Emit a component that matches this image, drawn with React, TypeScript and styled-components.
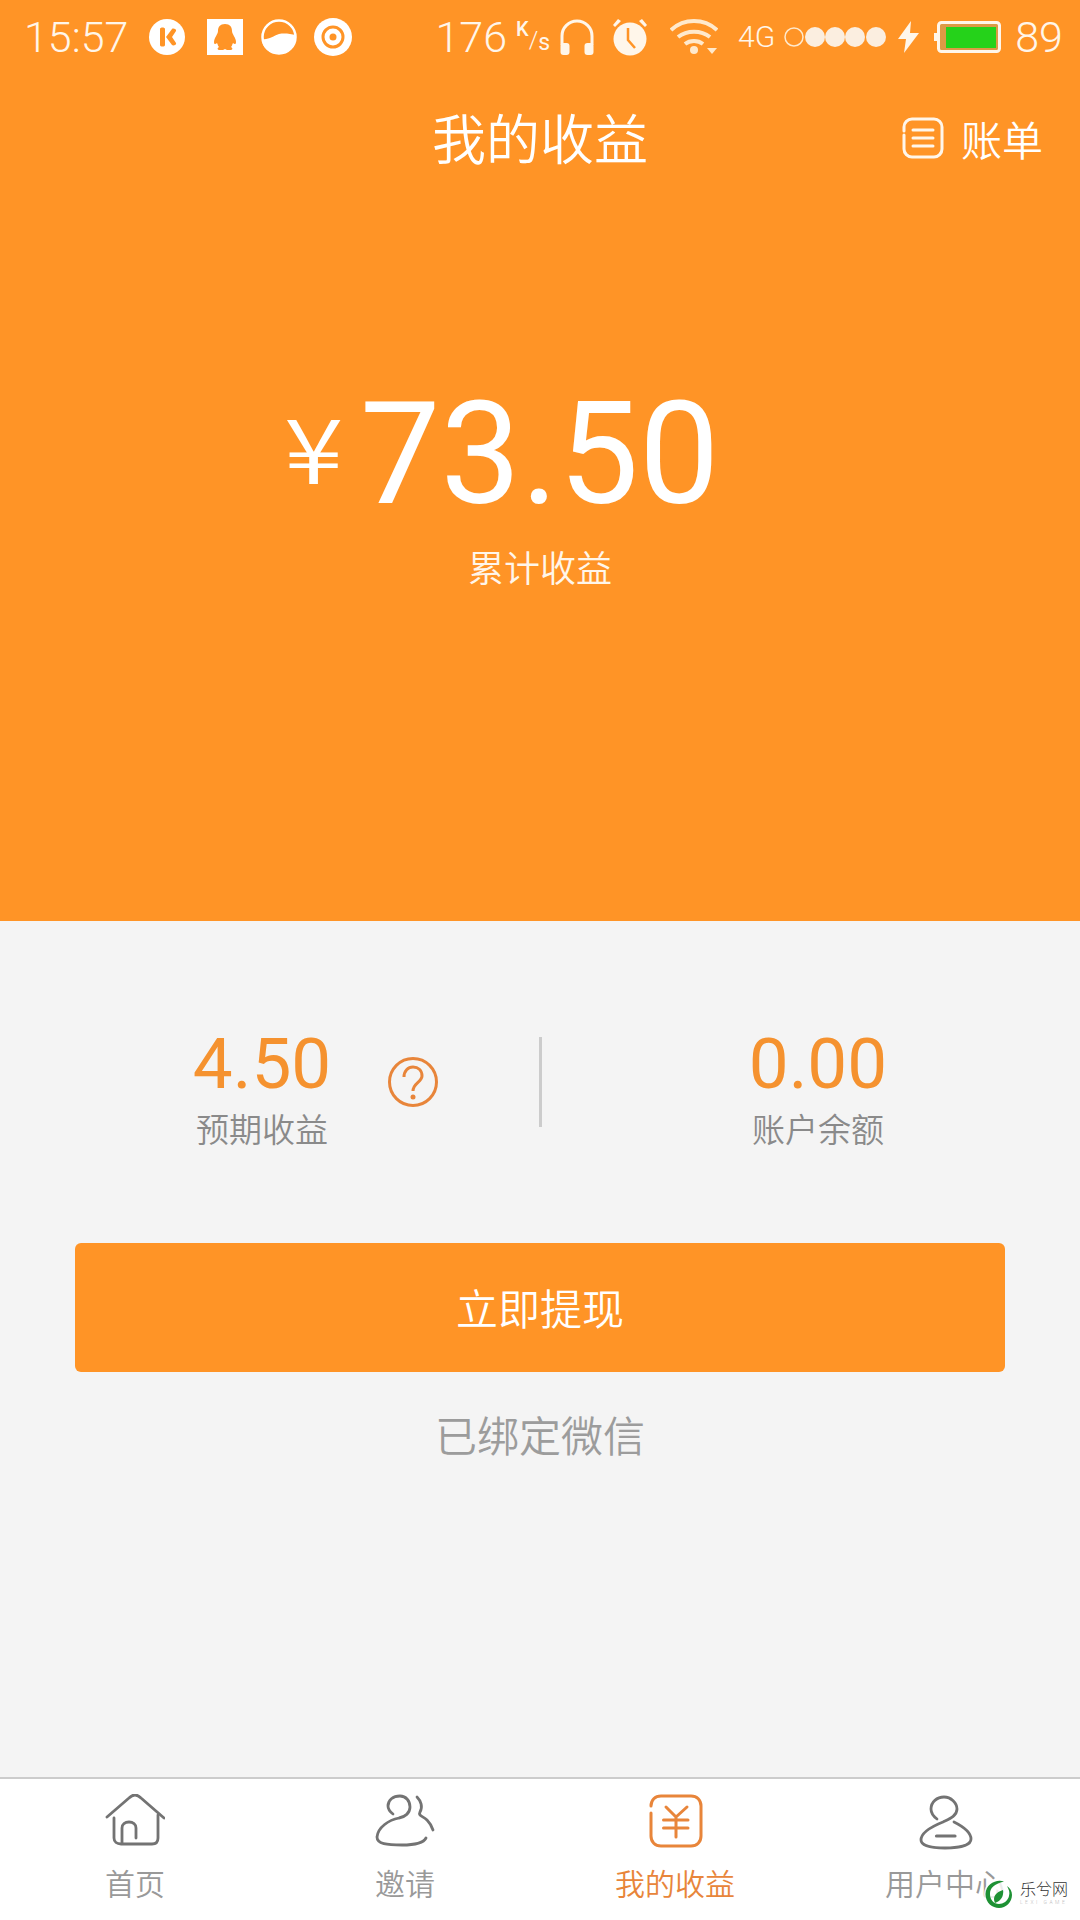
import * as React from 'react'
import styled, { createGlobalStyle } from 'styled-components'

const ORANGE = '#ff9426'
const TAB_ORANGE = '#e8853a'
const ICON_GREY = '#737373'
const CREAM = '#fff6ea'
const SANS = `Roboto, "Noto Sans CJK SC", sans-serif`

const GlobalStyle = createGlobalStyle`
  html, body {
    margin: 0;
    padding: 0;
    background: #f4f4f4;
  }
  * {
    box-sizing: border-box;
  }
`

const Page = styled.div`
  display: flex;
  flex-direction: column;
  font-family: ${SANS};
  height: 1920px;
  position: relative;
  width: 1080px;
`

const Hero = styled.section`
  background: ${ORANGE};
  color: #fff;
  display: flex;
  flex-direction: column;
  height: 921px;
`

const StatusBar = styled.div`
  align-items: center;
  display: flex;
  height: 74px;
  padding-left: 24px;
`

const StatusText = styled.span<{ $size?: number; $left?: number }>`
  color: ${CREAM};
  font-size: ${(p) => p.$size || 43}px;
  font-weight: 300;
  line-height: 1;
  margin-left: ${(p) => p.$left || 0}px;
`

const StatusIcon = styled.svg<{ $left: number }>`
  flex: none;
  margin-left: ${(p) => p.$left}px;
`

const SpeedUnit = styled.span`
  color: ${CREAM};
  display: flex;
  height: 32px;
  margin-left: 9px;
  width: 30px;
`

const SpeedKilo = styled.span`
  font-size: 20px;
  font-weight: 500;
  line-height: 16px;
`

const SpeedSlash = styled.span`
  font-size: 24px;
  font-weight: 300;
  line-height: 30px;
  margin-top: 4px;
`

const SpeedSec = styled.span`
  font-size: 23px;
  line-height: 24px;
  margin-top: 10px;
`

const NavBar = styled.header`
  align-items: center;
  display: flex;
  height: 128px;
  justify-content: center;
  position: relative;
`

const Title = styled.h1`
  font-size: 54px;
  font-weight: 350;
  margin: 0 0 4px;
`

const BillLink = styled.div`
  align-items: center;
  display: flex;
  font-size: 41px;
  font-weight: 350;
  gap: 17px;
  position: absolute;
  right: 37px;
  top: 34px;
`

const AmountBlock = styled.div`
  align-items: center;
  display: flex;
  flex-direction: column;
  padding-top: 181px;
`

const AmountRow = styled.div`
  align-items: flex-start;
  display: flex;
  line-height: 1;
  margin-right: 67px;
`

const Currency = styled.span`
  font-family: "Noto Sans CJK SC", sans-serif;
  font-size: 90px;
  font-weight: 350;
  line-height: 90px;
  margin: 17px 17px 0 0;
  transform: scaleX(1.2);
  transform-origin: right center;
`

const Amount = styled.span`
  font-size: 143px;
  font-weight: 400;
`

const AmountLabel = styled.div`
  color: ${CREAM};
  font-size: 36px;
  font-weight: 350;
  line-height: 48px;
  margin-top: 20px;
`

const Body = styled.main`
  align-items: center;
  display: flex;
  flex: 1;
  flex-direction: column;
`

const Stats = styled.div`
  align-items: center;
  display: flex;
  height: 90px;
  margin-top: 116px;
  width: 100%;
`

const StatSide = styled.div<{ $left: number }>`
  align-items: center;
  display: flex;
  gap: 58px;
  padding-left: ${(p) => p.$left}px;
  width: 539px;
`

const Divider = styled.div`
  background: #cccccc;
  height: 90px;
  margin-left: 1px;
  width: 3px;
`

const Stat = styled.div`
  align-items: center;
  display: flex;
  flex-direction: column;
  width: 136px;
`

const StatValue = styled.div`
  color: #f5922f;
  font-size: 71px;
  font-weight: 400;
  line-height: 70px;
  margin-top: 18px;
`

const StatLabel = styled.div`
  color: #8a8a8a;
  font-size: 33px;
  font-weight: 350;
  line-height: 46px;
  margin-top: 9px;
`

const WithdrawButton = styled.button`
  background: ${ORANGE};
  border: 0;
  border-radius: 6px;
  color: #fff;
  font-family: inherit;
  font-size: 42px;
  font-weight: 350;
  height: 129px;
  margin-top: 116px;
  padding: 0 0 2px;
  width: 930px;
`

const BoundNote = styled.div`
  color: #9c9c9c;
  font-size: 42px;
  font-weight: 350;
  line-height: 56px;
  margin-top: 38px;
`

const TabBar = styled.nav`
  background: #fff;
  border-top: 2px solid #cccccc;
  display: grid;
  grid-template-columns: repeat(4, 270px);
  height: 143px;
`

const Tab = styled.div<{ $active?: boolean }>`
  align-items: center;
  color: ${(p) => (p.$active ? TAB_ORANGE : '#999999')};
  display: flex;
  flex-direction: column;
  font-size: 30px;
  font-weight: 350;
  padding-top: 15px;
`

const TabIcon = styled.svg`
  display: block;
  height: 56px;
  width: 60px;
`

const TabLabel = styled.span`
  line-height: 40px;
  margin-top: 15px;
`

const Watermark = styled.div`
  align-items: center;
  bottom: 11px;
  display: flex;
  gap: 6px;
  position: absolute;
  right: 12px;
`

const WatermarkText = styled.div`
  color: #333;
  display: flex;
  flex-direction: column;
  font-size: 16px;
  font-weight: 300;
  line-height: 17px;
`

const WatermarkSub = styled.span`
  color: #bbb;
  font-size: 5px;
  letter-spacing: 2.500px;
  line-height: 9px;
  white-space: nowrap;
`

const Line = { fill: 'none', stroke: 'currentColor', strokeLinecap: 'round', strokeLinejoin: 'round' } as const

const App: React.FC = () => {
  return (
    <>
      <GlobalStyle />
      <Page>
        <Hero>
          <StatusBar>
            <StatusText>15:57</StatusText>
            {/* k */}
            <StatusIcon $left={21} width="36" height="36" viewBox="0 0 36 36">
              <circle cx="18" cy="18" r="18" fill="#fff" />
              <path d="M11 10c0-2 5-2 5 0v16c0 2-5 2-5 0zM17 18l6-8c1-1 5 0 4 2l-4 6 4 6c1 2-3 3-4 2z" fill={ORANGE} />
            </StatusIcon>
            {/* qq */}
            <StatusIcon $left={22} width="36" height="36" viewBox="0 0 36 36">
              <rect width="36" height="36" fill="#fff" />
              <path d="M18 5c-5 0-7 3-7 7 0 3-4 7-4 11 0 2 1 3 3 1 1 2 1 3 2 4-2 1-2 3 1 3h3l2-1 2 1h3c3 0 3-2 1-3 1-1 1-2 2-4 2 2 3 1 3-1 0-4-4-8-4-11 0-4-2-7-7-7z" fill={ORANGE} />
            </StatusIcon>
            {/* half moon */}
            <StatusIcon $left={18} width="36" height="36" viewBox="0 0 36 36">
              <circle cx="18" cy="18" r="16.500" fill="none" stroke="#fff" strokeWidth="2.500" />
              <path d="M1 20c7 1 11-3 17-5 6-1 11 0 17 1 0 11-8 19-17 19S1 29 1 20z" fill="#fff" />
            </StatusIcon>
            {/* target */}
            <StatusIcon $left={17} width="38" height="38" viewBox="0 0 38 38">
              <circle cx="19" cy="19" r="19" fill="#fff" />
              <circle cx="19" cy="19" r="10" fill="none" stroke={ORANGE} strokeWidth="3" />
              <circle cx="19" cy="19" r="3.500" fill={ORANGE} />
            </StatusIcon>
            <StatusText $left={83}>176</StatusText>
            <SpeedUnit>
              <SpeedKilo>K</SpeedKilo>
              <SpeedSlash>/</SpeedSlash>
              <SpeedSec>s</SpeedSec>
            </SpeedUnit>
            {/* headphones */}
            <StatusIcon $left={14} width="34" height="36" viewBox="0 0 34 36">
              <path d="M2 26V17a15 15 0 0 1 30 0v9" fill="none" stroke={CREAM} strokeWidth="3" />
              <rect x="0.500" y="24" width="9" height="12" rx="3" fill={CREAM} />
              <rect x="24.500" y="24" width="9" height="12" rx="3" fill={CREAM} />
            </StatusIcon>
            {/* alarm */}
            <StatusIcon $left={18} width="36" height="38" viewBox="0 0 36 38">
              <circle cx="18" cy="21" r="16.500" fill={CREAM} />
              <path d="M1 7l5-6 3 2-6 6zM35 7l-5-6-3 2 6 6z" fill={CREAM} />
              <path d="M16 10v12l7 8" fill="none" stroke={ORANGE} strokeWidth="2.500" />
            </StatusIcon>
            {/* wifi */}
            <StatusIcon $left={22} width="48" height="36" viewBox="0 0 48 36">
              <g fill="none" stroke="#ffe9cc" strokeWidth="4">
                <path d="M1 11c13-12 33-12 46 0" />
                <path d="M8 18c9-7 23-7 32 0" />
                <path d="M15 25c5-4 13-4 18 0" />
              </g>
              <circle cx="24" cy="31" r="4" fill="#ffe9cc" />
              <path d="M37 29h10l-5 6z" fill="#ffe9cc" />
            </StatusIcon>
            <StatusText $size={30} $left={20}>4G</StatusText>
            {/* signal dots */}
            <StatusIcon $left={9} width="102" height="20" viewBox="0 0 102 20">
              <circle cx="10" cy="10" r="9" fill="none" stroke="#ffe9cc" strokeWidth="1.500" />
              <circle cx="31" cy="10" r="10" fill="#fbeee0" />
              <circle cx="51" cy="10" r="10" fill="#fbeee0" />
              <circle cx="71" cy="10" r="10" fill="#fbeee0" />
              <circle cx="92" cy="10" r="10" fill="#fbeee0" />
            </StatusIcon>
            {/* charging bolt */}
            <StatusIcon $left={11} width="22" height="32" viewBox="0 0 22 32">
              <path d="M14 0L1 18h8L7 32l15-20h-9z" fill={CREAM} />
            </StatusIcon>
            {/* battery */}
            <StatusIcon $left={15} width="67" height="32" viewBox="0 0 67 32">
              <rect x="0" y="12" width="3" height="8" fill={CREAM} />
              <rect x="4.500" y="1.500" width="61" height="29" rx="3" fill="#dd9a45" stroke={CREAM} strokeWidth="3" />
              <rect x="12" y="6" width="50" height="21" fill="#25d21a" />
            </StatusIcon>
            <StatusText $left={14}>89</StatusText>
          </StatusBar>
          <NavBar>
            <Title>我的收益</Title>
            <BillLink>
              <svg width="42" height="42" viewBox="0 0 42 42">
                <g {...Line} strokeWidth="3" stroke={CREAM}>
                  <path d="M2 14v-4a8 8 0 0 1 8-8h22a8 8 0 0 1 8 8v22a8 8 0 0 1-8 8H10a8 8 0 0 1-8-8V18" />
                  <path d="M11 13h20M11 21h20M11 29h20" />
                </g>
              </svg>
              账单
            </BillLink>
          </NavBar>
          <AmountBlock>
            <AmountRow>
              <Currency>¥</Currency>
              <Amount>73.50</Amount>
            </AmountRow>
            <AmountLabel>累计收益</AmountLabel>
          </AmountBlock>
        </Hero>
        <Body>
          <Stats>
            <StatSide $left={194}>
              <Stat>
                <StatValue>4.50</StatValue>
                <StatLabel>预期收益</StatLabel>
              </Stat>
              <svg width="50" height="50" viewBox="0 0 50 50">
                <circle cx="25" cy="25" r="23.500" fill="none" stroke={TAB_ORANGE} strokeWidth="3" />
                <path d="M16 20c0-6 4-10 9-10s9 3 9 9c0 6-9 7-9 15" fill="none" stroke={TAB_ORANGE} strokeWidth="3" />
                <circle cx="25" cy="40" r="2.500" fill={TAB_ORANGE} />
              </svg>
            </StatSide>
            <Divider />
            <StatSide $left={208}>
              <Stat>
                <StatValue>0.00</StatValue>
                <StatLabel>账户余额</StatLabel>
              </Stat>
            </StatSide>
          </Stats>
          <WithdrawButton>立即提现</WithdrawButton>
          <BoundNote>已绑定微信</BoundNote>
        </Body>
        <TabBar>
          <Tab>
            <TabIcon viewBox="0 0 60 56" color={ICON_GREY}>
              <g {...Line} strokeWidth="2.800">
                <path d="M2 23L24 4c4-4 8-4 12 0l23 20" />
                <path d="M9 24v20c0 4 3 6 7 6h31c4 0 6-2 6-6V21" />
                <path d="M17 49V34c0-4 3-6 7-6s7 2 7 6v10" />
              </g>
            </TabIcon>
            <TabLabel>首页</TabLabel>
          </Tab>
          <Tab>
            <TabIcon viewBox="0 0 60 56" color={ICON_GREY}>
              <g {...Line} strokeWidth="2.800">
                <path d="M18 20C14 17 13 14 13 12 13 6 18 2 25 2c6 0 10 5 10 11 0 6-5 10-11 11C14 26 3 33 2 43c0 7 10 8 25 8 11 0 21-1 24-7" />
                <path d="M42 3c4 4 6 10 3 15-2 4 3 4 7 8 3 3 5 7 6 10" />
              </g>
            </TabIcon>
            <TabLabel>邀请</TabLabel>
          </Tab>
          <Tab $active>
            <TabIcon viewBox="0 0 60 56" color={TAB_ORANGE}>
              <g {...Line} strokeWidth="3">
                <path d="M6 12c0-6 4-10 10-10h30c6 0 10 4 10 10v30c0 6-4 10-10 10H16C10 52 6 48 6 42V19" />
                <path d="M21 13l10 10 11-10M18.500 26h24.500M18.500 34h24.500M31 23v20" />
              </g>
            </TabIcon>
            <TabLabel>我的收益</TabLabel>
          </Tab>
          <Tab>
            <TabIcon viewBox="0 0 60 56" color={ICON_GREY}>
              <g {...Line} strokeWidth="2.800">
                <path d="M22 25c-4-3-6-7-6-10C16 8 22 3 29 3s13 6 13 12c0 7-8 10-14 13C18 32 6 38 6 46c0 6 12 8 24 8s26-2 26-9c0-7-9-13-17-17" />
                <path d="M21.500 42H40" strokeWidth="3.200" />
              </g>
            </TabIcon>
            <TabLabel>用户中心</TabLabel>
          </Tab>
        </TabBar>
        <Watermark>
          <svg width="30" height="30" viewBox="0 0 30 30">
            <circle cx="15" cy="15" r="15" fill="#fff" fillOpacity="0.800" />
            <path d="M20 2.500C12 0 2 5 1.500 15c0 9 7 14 13.500 14 7 0 13-6 13-13 0-4-2-7-5-9 2 4 3 6 2 10-1 5-6 8-10 8-5 0-9-4-9-10S10 5 20 2.500z" fill="#1e9134" />
            <path d="M11 24c-3-6 1-11 8-13 1 6-2 11-8 13z" fill="#1e9134" />
          </svg>
          <WatermarkText>
            乐兮网
            <WatermarkSub>LEXI GAME</WatermarkSub>
          </WatermarkText>
        </Watermark>
      </Page>
    </>
  )
}

export default App
